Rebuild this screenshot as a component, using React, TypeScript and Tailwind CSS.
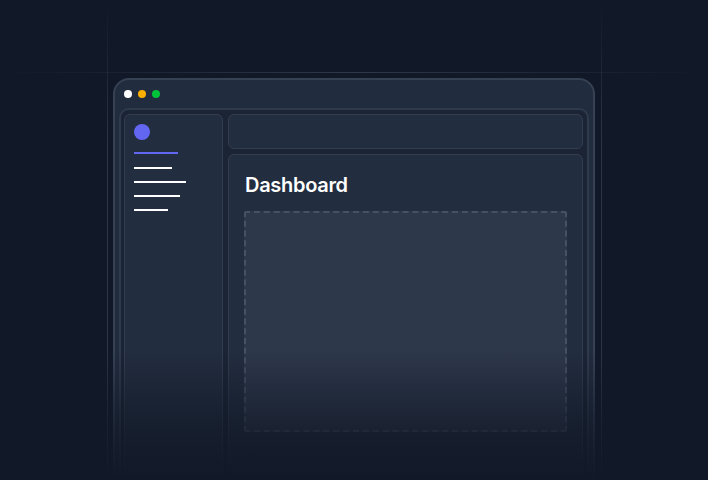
const NAV_LINES = ['w-[38px]', 'w-[52px]', 'w-[46px]', 'w-[34px]']

export default function App() {
  return (
    <div className="relative w-[708px] h-[480px] overflow-hidden bg-[#111827] font-['Inter',sans-serif]">
      {/* guide lines */}
      <div className="absolute left-[107px] top-0 w-px h-full bg-gradient-to-b from-transparent via-[#2c3647] via-30% to-[#2c3647]" />
      <div className="absolute left-[601px] top-0 w-px h-full bg-gradient-to-b from-transparent via-[#2c3647] via-30% to-[#2c3647]" />
      <div className="absolute left-0 top-[72px] w-full h-px bg-gradient-to-r from-transparent via-[#2e3849] to-transparent" />

      {/* window */}
      <div className="relative ml-[113px] mt-[78px] w-[482px] h-[420px] rounded-t-[16px] border-2 border-[#364154] bg-[#212c3e] px-[4px]">
        <div className="flex items-center gap-[6px] h-[28px] pl-[5px]">
          <span className="w-2 h-2 rounded-full bg-white" />
          <span className="w-2 h-2 rounded-full bg-[#fbb000]" />
          <span className="w-2 h-2 rounded-full bg-[#00c33a]" />
        </div>

        <div className="flex gap-[5px] h-[400px] rounded-t-[10px] border-2 border-[#2f3a4c] bg-[#1a2434] pt-[4px] pl-[3px] pr-[4px]">
          {/* sidebar */}
          <div className="w-[99px] shrink-0 rounded-[6px] border border-[#323d50] bg-[#222d3f] pl-[9px] pt-[9px]">
            <div className="w-4 h-4 rounded-full bg-[#6366f1]" />
            <div className="mt-[12px] w-[44px] h-[2px] bg-[#6366f1]" />
            <div className="flex flex-col gap-[12px] mt-[13px]">
              {NAV_LINES.map((w) => (
                <div key={w} className={`${w} h-[2px] bg-white`} />
              ))}
            </div>
          </div>

          {/* content */}
          <div className="flex-1 flex flex-col gap-[5px]">
            <div className="h-[35px] rounded-[6px] border border-[#323d50] bg-[#222d3f]" />
            <div className="flex-1 rounded-[6px] border border-[#323d50] bg-[#222d3f] px-[15px] pt-[18px]">
              <h1 className="pl-[1px] text-[20px] leading-[24px] font-semibold text-white tracking-[-0.3px]">Dashboard</h1>
              <div className="mt-[14px] w-[323px] h-[221px] rounded-[2px] border-2 border-dashed border-[#465264] bg-[#2e384b]" />
            </div>
          </div>
        </div>
      </div>

      {/* bottom fade */}
      <div className="absolute left-0 bottom-0 w-full h-[130px] bg-gradient-to-b from-transparent via-[#111827]/60 to-[#111827]" />
    </div>
  )
}
